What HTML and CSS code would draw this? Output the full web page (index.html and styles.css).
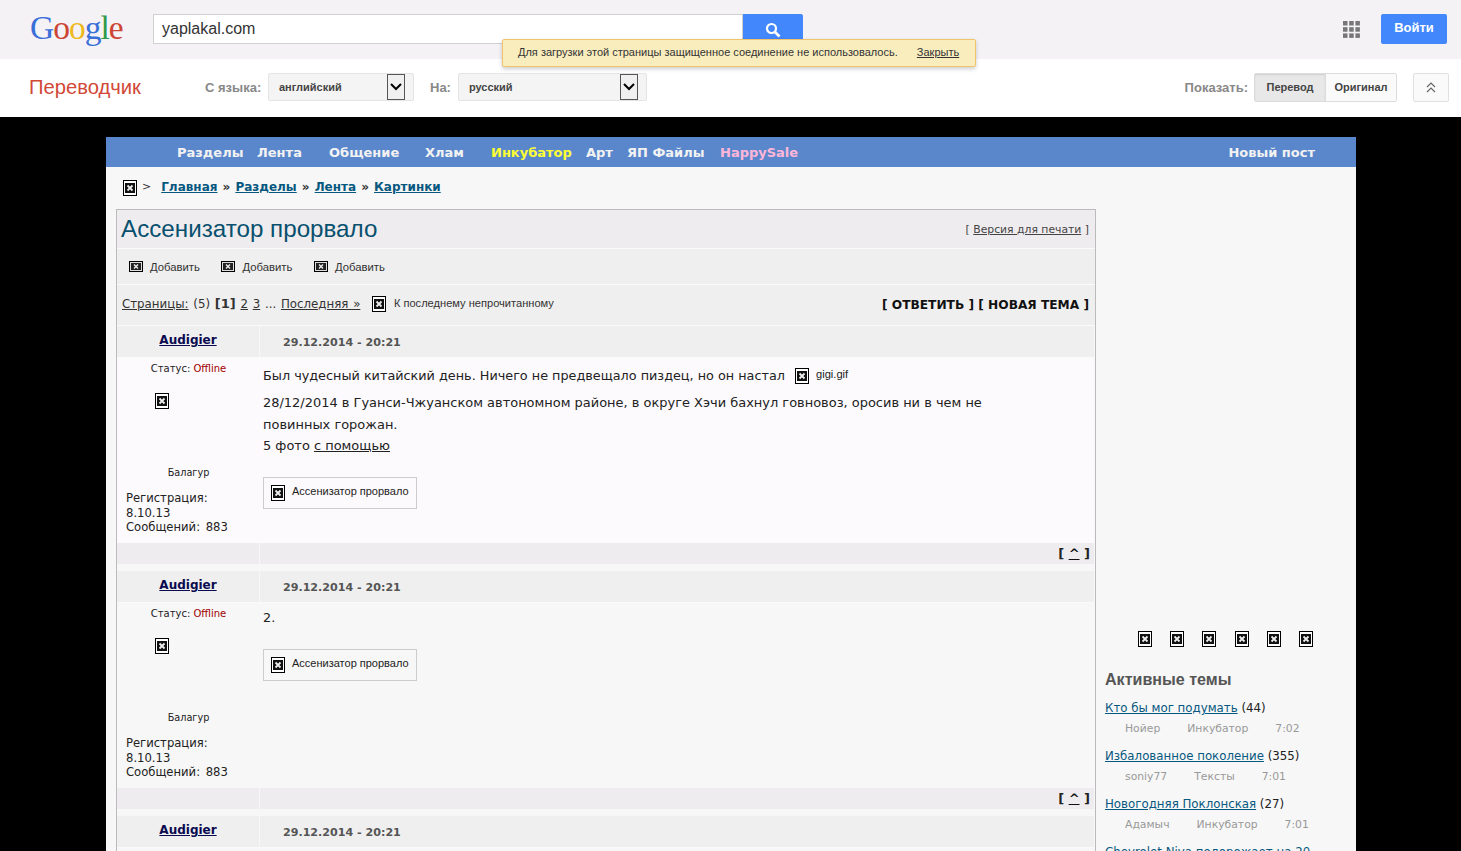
FILE: index.html
```html
<!DOCTYPE html>
<html lang="ru">
<head>
    <meta charset="UTF-8">
    <title>Ассенизатор прорвало</title>
    <link rel="stylesheet" href="styles.css">
</head>
<body>
    <svg class="defs" width="0" height="0">
        <symbol id="broken" viewBox="0 0 14 16">
            <rect x="0.5" y="0.5" width="13" height="15" fill="#fff" stroke="#000"/>
            <rect x="2" y="3" width="10" height="10" fill="#111"/>
            <path d="M4.5 5.5l5 5M9.5 5.5l-5 5" stroke="#eee" stroke-width="1.8"/>
        </symbol>
        <symbol id="broken-wide" viewBox="0 0 14 11">
            <rect x="0.5" y="0.5" width="13" height="10" fill="#ddd" stroke="#000"/>
            <rect x="2" y="2" width="10" height="7" fill="#222"/>
            <path d="M5 3.5l4 4M9 3.5l-4 4" stroke="#eee" stroke-width="1.4"/>
        </symbol>
    </svg>

    <!-- Google bar -->
    <header class="gbar">
        <div class="logo"><span class="blue">G</span><span class="red">o</span><span class="yellow">o</span><span class="blue">g</span><span class="green">l</span><span class="red">e</span></div>
        <div class="search">
            <div class="search-input">yaplakal.com</div>
            <div class="search-button">
                <svg width="16" height="16" viewBox="0 0 16 16"><circle cx="6.5" cy="6.5" r="4.5" fill="none" stroke="#fff" stroke-width="2.2"/><path d="M10 10l4.5 4.5" stroke="#fff" stroke-width="2.6"/></svg>
            </div>
        </div>
        <div class="gbar-right">
            <svg class="apps" width="17" height="17" viewBox="0 0 17 17" fill="#777">
                <rect width="4.5" height="4.5"/><rect x="6.2" width="4.5" height="4.5"/><rect x="12.4" width="4.5" height="4.5"/>
                <rect y="6.2" width="4.5" height="4.5"/><rect x="6.2" y="6.2" width="4.5" height="4.5"/><rect x="12.4" y="6.2" width="4.5" height="4.5"/>
                <rect y="12.4" width="4.5" height="4.5"/><rect x="6.2" y="12.4" width="4.5" height="4.5"/><rect x="12.4" y="12.4" width="4.5" height="4.5"/>
            </svg>
            <div class="login">Войти</div>
        </div>
    </header>

    <!-- Security notice -->
    <div class="notice">
        <span>Для загрузки этой страницы защищенное соединение не использовалось.</span>
        <a href="#">Закрыть</a>
    </div>

    <!-- Translate bar -->
    <div class="tbar">
        <div class="tbar-title">Переводчик</div>
        <span class="tbar-label from-label">С языка:</span>
        <div class="lang lang-from">
            <span>английский</span>
            <div class="lang-arrow"><svg width="12" height="8" viewBox="0 0 12 8"><path d="M1 1l5 5 5-5" fill="none" stroke="#000" stroke-width="2"/></svg></div>
        </div>
        <span class="tbar-label to-label">На:</span>
        <div class="lang lang-to">
            <span>русский</span>
            <div class="lang-arrow"><svg width="12" height="8" viewBox="0 0 12 8"><path d="M1 1l5 5 5-5" fill="none" stroke="#000" stroke-width="2"/></svg></div>
        </div>
        <div class="tbar-right">
            <span class="tbar-label">Показать:</span>
            <div class="toggle">
                <div class="toggle-item selected">Перевод</div>
                <div class="toggle-item">Оригинал</div>
            </div>
            <div class="collapse">
                <svg width="10" height="11" viewBox="0 0 10 11"><path d="M1 5l4-4 4 4M1 10l4-4 4 4" fill="none" stroke="#666" stroke-width="1.2"/></svg>
            </div>
        </div>
    </div>

    <!-- Forum page -->
    <div class="stage">
        <div class="page">
            <nav class="nav">
                <a href="#" class="n1">Разделы</a>
                <a href="#" class="n2">Лента</a>
                <a href="#" class="n3">Общение</a>
                <a href="#" class="n4">Хлам</a>
                <a href="#" class="n5 incubator">Инкубатор</a>
                <a href="#" class="n6">Арт</a>
                <a href="#" class="n7">ЯП Файлы</a>
                <a href="#" class="n8 happy">HappySale</a>
                <a href="#" class="new-post">Новый пост</a>
            </nav>

            <div class="crumbs">
                <svg class="ico"><use href="#broken"/></svg>
                <span class="gt">&gt;</span>
                <span class="crumb-links"><a href="#">Главная</a> » <a href="#">Разделы</a> » <a href="#">Лента</a> » <a href="#">Картинки</a></span>
            </div>

            <div class="columns">
                <main class="topic">
                    <div class="topic-title">
                        <h1>Ассенизатор прорвало</h1>
                        <span class="print">[ <a href="#">Версия для печати</a> ]</span>
                    </div>
                    <div class="topic-add">
                        <span class="add"><svg class="ico-wide"><use href="#broken-wide"/></svg>Добавить</span>
                        <span class="add"><svg class="ico-wide"><use href="#broken-wide"/></svg>Добавить</span>
                        <span class="add"><svg class="ico-wide"><use href="#broken-wide"/></svg>Добавить</span>
                    </div>
                    <div class="topic-pages">
                        <div class="pages">
                            <a href="#">Страницы:</a> (5) <b>[1]</b> <a href="#">2</a> <a href="#">3</a> ... <a href="#">Последняя »</a>
                            <svg class="ico unread-ico"><use href="#broken"/></svg>
                            <span class="unread">К последнему непрочитанному</span>
                        </div>
                        <div class="reply">[ ОТВЕТИТЬ ] [ НОВАЯ ТЕМА ]</div>
                    </div>

                    <article class="post">
                        <div class="post-author"><a href="#">Audigier</a></div>
                        <div class="post-date">29.12.2014 - 20:21</div>
                        <aside class="post-user">
                            <div class="status">Статус: <span>Offline</span></div>
                            <svg class="ico avatar"><use href="#broken"/></svg>
                            <div class="rank">Балагур</div>
                            <div class="stats">Регистрация:<br>8.10.13<br>Сообщений: 883</div>
                        </aside>
                        <div class="post-body">
                            <p class="line-one">Был чудесный китайский день. Ничего не предвещало пиздец, но он настал <svg class="ico gif-ico"><use href="#broken"/></svg><span class="gif">gigi.gif</span></p>
                            <p class="text">28/12/2014 в Гуанси-Чжуанском автономном районе, в округе Хэчи бахнул говновоз, оросив ни в чем не<br>повинных горожан.<br>5 фото <a href="#">с помощью</a></p>
                            <div class="thumb"><svg class="ico"><use href="#broken"/></svg><span>Ассенизатор прорвало</span></div>
                        </div>
                        <div class="post-foot-l"></div>
                        <div class="post-foot-r"><b>[ <a href="#">^</a> ]</b></div>
                    </article>

                    <article class="post second">
                        <div class="post-author"><a href="#">Audigier</a></div>
                        <div class="post-date">29.12.2014 - 20:21</div>
                        <aside class="post-user">
                            <div class="status">Статус: <span>Offline</span></div>
                            <svg class="ico avatar"><use href="#broken"/></svg>
                            <div class="rank">Балагур</div>
                            <div class="stats">Регистрация:<br>8.10.13<br>Сообщений: 883</div>
                        </aside>
                        <div class="post-body">
                            <p class="line-one">2.</p>
                            <div class="thumb thumb-second"><svg class="ico"><use href="#broken"/></svg><span>Ассенизатор прорвало</span></div>
                        </div>
                        <div class="post-foot-l"></div>
                        <div class="post-foot-r"><b>[ <a href="#">^</a> ]</b></div>
                    </article>

                    <article class="post">
                        <div class="post-author"><a href="#">Audigier</a></div>
                        <div class="post-date">29.12.2014 - 20:21</div>
                    </article>
                </main>

                <aside class="side">
                    <div class="side-icons">
                        <svg class="ico"><use href="#broken"/></svg>
                        <svg class="ico"><use href="#broken"/></svg>
                        <svg class="ico"><use href="#broken"/></svg>
                        <svg class="ico"><use href="#broken"/></svg>
                        <svg class="ico"><use href="#broken"/></svg>
                        <svg class="ico"><use href="#broken"/></svg>
                    </div>
                    <h2>Активные темы</h2>
                    <div class="hot">
                        <div class="hot-title"><a href="#">Кто бы мог подумать</a> (44)</div>
                        <div class="hot-meta"><span>Нойер</span><span>Инкубатор</span><span>7:02</span></div>
                    </div>
                    <div class="hot">
                        <div class="hot-title"><a href="#">Избалованное поколение</a> (355)</div>
                        <div class="hot-meta"><span>soniy77</span><span>Тексты</span><span>7:01</span></div>
                    </div>
                    <div class="hot">
                        <div class="hot-title"><a href="#">Новогодняя Поклонская</a> (27)</div>
                        <div class="hot-meta"><span>Адамыч</span><span>Инкубатор</span><span>7:01</span></div>
                    </div>
                    <div class="hot">
                        <div class="hot-title"><a href="#">Chevrolet Niva подорожает на 20</a></div>
                    </div>
                </aside>
            </div>
        </div>
    </div>
</body>
</html>
```

FILE: styles.css
```css
/* General */
html, body {
    margin: 0;
    padding: 0;
    height: 851px;
    overflow: hidden;
}

body {
    font-family: "DejaVu Sans", Verdana, sans-serif;
    font-size: 13px;
    color: #222;
    background-color: #000;
    position: relative;
}

.defs {
    position: absolute;
}

.ico {
    width: 14px;
    height: 16px;
    flex: none;
}

.ico-wide {
    width: 14px;
    height: 11px;
    margin-right: 7px;
    flex: none;
}

/* Google bar */
.gbar {
    height: 59px;
    background-color: #f5f2f6;
    display: flex;
    align-items: flex-start;
    box-sizing: border-box;
    padding-left: 30px;
    font-family: "Liberation Sans", Arial, sans-serif;
}

.logo {
    font-family: "Liberation Serif", "Times New Roman", serif;
    font-size: 33.5px;
    line-height: 40px;
    margin-top: 8px;
    width: 123px;
    letter-spacing: -1px;
}

.blue { color: #3a6fd8; }
.red { color: #cc4433; }
.yellow { color: #eeb920; }
.green { color: #2f9a4a; }

.search {
    display: flex;
    margin-top: 14px;
}

.search-input {
    width: 590px;
    height: 30px;
    box-sizing: border-box;
    border: 1px solid #d0d0d0;
    background-color: #fff;
    padding-left: 8px;
    font-size: 16px;
    line-height: 27px;
    color: #333;
}

.search-button {
    width: 60px;
    height: 30px;
    background-color: #4387fd;
    border-radius: 0 2px 2px 0;
    display: flex;
    align-items: center;
    justify-content: center;
    padding-top: 2px;
    box-sizing: border-box;
}

.gbar-right {
    margin-left: auto;
    display: flex;
    align-items: center;
    gap: 21px;
    padding: 14px 14px 0 0;
}

.login {
    width: 66px;
    height: 30px;
    border-radius: 2px;
    background-color: #4387fd;
    color: #fff;
    font-weight: bold;
    font-size: 13px;
    text-align: center;
    line-height: 28px;
}

/* Security notice */
.notice {
    position: absolute;
    left: 502px;
    top: 39px;
    width: 474px;
    height: 28px;
    box-sizing: border-box;
    background-color: #f9edbe;
    border: 1px solid #f0c36d;
    border-radius: 2px;
    box-shadow: 0 2px 4px rgba(0, 0, 0, 0.2);
    font-family: "Liberation Sans", Arial, sans-serif;
    font-size: 11px;
    line-height: 24px;
    color: #333;
    padding-left: 15px;
    white-space: nowrap;
}

.notice a {
    color: #333;
    margin-left: 16px;
}

/* Translate bar */
.tbar {
    height: 58px;
    background-color: #fff;
    display: flex;
    align-items: center;
    box-sizing: border-box;
    padding: 0 0 2px 29px;
    font-family: "Liberation Sans", Arial, sans-serif;
}

.tbar-title {
    font-size: 20.2px;
    color: #d14836;
    width: 176px;
}

.tbar-label {
    font-size: 13px;
    font-weight: bold;
    color: #888;
}

.from-label {
    width: 63px;
}

.to-label {
    margin: 0 7px 0 16px;
}

.lang {
    height: 28px;
    background-color: #f4f4f4;
    border: 1px solid #e4e4e4;
    border-radius: 2px;
    box-sizing: border-box;
    display: flex;
    justify-content: space-between;
    padding-left: 10px;
    font-size: 11px;
    font-weight: bold;
    line-height: 26px;
    color: #444;
}

.lang-from {
    width: 146px;
}

.lang-to {
    width: 189px;
}

.lang-arrow {
    width: 18px;
    height: 26px;
    margin-right: 8px;
    border: 1px solid #555;
    box-sizing: border-box;
    background-color: #f0f0f0;
    display: flex;
    align-items: center;
    justify-content: center;
}

.tbar-right {
    margin-left: auto;
    display: flex;
    align-items: center;
    padding-right: 12px;
}

.toggle {
    display: flex;
    margin-left: 6px;
    height: 29px;
    border: 1px solid #dcdcdc;
    border-radius: 2px;
    box-sizing: border-box;
    font-size: 11px;
    font-weight: bold;
    line-height: 27px;
    color: #444;
}

.toggle-item {
    width: 70px;
    text-align: center;
    background-color: #fafafa;
}

.toggle-item.selected {
    background-color: #e8e8e8;
    box-shadow: inset 0 1px 2px rgba(0, 0, 0, 0.1);
    border-right: 1px solid #dcdcdc;
}

.collapse {
    width: 36px;
    height: 29px;
    margin-left: 16px;
    border: 1px solid #e0e0e0;
    border-radius: 2px;
    box-sizing: border-box;
    background-color: #fafafa;
    display: flex;
    align-items: center;
    justify-content: center;
}

/* Forum page */
.stage {
    padding: 20px 105px 0 106px;
}

.page {
    background-color: #f7f7f7;
    height: 714px;
    overflow: hidden;
}

.nav {
    height: 30px;
    background-color: #5a87cc;
    font-weight: bold;
    font-size: 13px;
    line-height: 31px;
    display: flex;
    padding-left: 71px;
}

.nav a {
    color: #f2f2f2;
    text-decoration: none;
}

.nav .n1 { width: 80px; }
.nav .n2 { width: 72px; }
.nav .n3 { width: 96px; }
.nav .n4 { width: 66px; }
.nav .n5 { width: 95px; }
.nav .n6 { width: 41px; }
.nav .n7 { width: 93px; }

.nav .incubator { color: #ffff33; }
.nav .happy { color: #ffb6d9; }

.nav .new-post {
    margin-left: auto;
    margin-right: 41px;
}

.crumbs {
    display: flex;
    align-items: center;
    gap: 4px;
    height: 42px;
    padding-left: 17px;
    font-weight: bold;
    font-size: 12px;
    color: #333;
}

.crumbs a {
    color: #07587f;
}

.crumbs .gt {
    font-weight: normal;
    font-size: 11px;
    margin: 0 6px 3px 1px;
}

.crumb-links {
    margin-bottom: 2px;
    word-spacing: 0.9px;
}

.columns {
    display: flex;
    align-items: flex-start;
    margin-left: 10px;
}

/* Topic */
.topic {
    width: 980px;
    box-sizing: border-box;
    border: 1px solid #bbb;
    border-bottom: none;
    background-color: #f7f7f7;
}

.topic-title {
    height: 38px;
    background-color: #efecef;
    border-bottom: 1px solid #fafafa;
    display: flex;
    justify-content: space-between;
    align-items: center;
    padding: 0 6px 0 4px;
}

.topic-title h1 {
    margin: 0;
    font-family: "Liberation Sans", Arial, sans-serif;
    font-weight: normal;
    font-size: 24.2px;
    color: #07506e;
}

.print {
    font-size: 10.8px;
    color: #444;
}

.print a {
    color: #444;
}

.topic-add {
    height: 35px;
    background-color: #efefef;
    border-bottom: 1px solid #fafafa;
    display: flex;
    align-items: center;
    padding-left: 12px;
    gap: 21.5px;
    font-family: "Liberation Sans", Arial, sans-serif;
    font-size: 11.3px;
    color: #333;
}

.add {
    display: flex;
    align-items: center;
}

.topic-pages {
    height: 40px;
    background-color: #efefef;
    border-bottom: 1px solid #fafafa;
    display: flex;
    justify-content: space-between;
    align-items: center;
    padding: 0 6px 0 5px;
    font-size: 11.8px;
}

.pages {
    color: #333;
    white-space: nowrap;
    margin-bottom: 2px;
    word-spacing: 1px;
}

.pages a {
    color: #333;
}

.pages b {
    font-size: 13px;
}

.unread-ico {
    vertical-align: -4px;
    margin-left: 7px;
}

.unread {
    font-family: "Liberation Sans", Arial, sans-serif;
    font-size: 11.1px;
    word-spacing: 0;
    margin-left: 3px;
    position: relative;
    top: -1px;
}

.reply {
    font-size: 12.2px;
    font-weight: bold;
    color: #111;
}

/* Posts */
.post {
    display: grid;
    grid-template-columns: 142px 1fr;
    column-gap: 1px;
    margin: 0 1px 6px 0;
}

.post.second {
    margin: 7px 1px 7px 0;
}

.post-author, .post-date {
    height: 32px;
    background-color: #efefef;
    border-bottom: 1px solid #fafafa;
    box-sizing: border-box;
}

.post-author {
    text-align: center;
    font-size: 12px;
    font-weight: bold;
    line-height: 29px;
}

.post-author a {
    color: #0a0a50;
}

.post-date {
    padding-left: 23px;
    font-size: 11.1px;
    font-weight: bold;
    color: #555;
    line-height: 34px;
}

.post-user, .post-body {
    height: 185px;
    box-sizing: border-box;
    background-color: #fdfafd;
}

.post.second .post-user, .post.second .post-body {
    background-color: #f7f7f7;
}

.post-user {
    font-size: 10px;
    padding-top: 5px;
    margin-right: -1px;
}

.status {
    text-align: center;
    color: #222;
}

.status span {
    color: #a00000;
}

.avatar {
    display: block;
    margin: 19px 0 0 38px;
}

.rank {
    text-align: center;
    font-size: 9.7px;
    margin-top: 58px;
}

.stats {
    margin: 13px 0 0 9px;
    font-size: 11.6px;
    line-height: 14.5px;
    word-spacing: 2px;
}

.post-body {
    padding: 9px 3px;
}

.post.second .post-body {
    padding-top: 6px;
}

.post-body p {
    margin: 0;
}

.line-one {
    font-size: 12.8px;
    line-height: 18px;
}

.gif-ico {
    vertical-align: -4px;
    margin-left: 6px;
}

.gif {
    font-family: "Liberation Sans", Arial, sans-serif;
    font-size: 11.1px;
    margin-left: 7px;
    position: relative;
    top: -2px;
}

.post-body .text {
    margin-top: 7px;
    font-size: 12.96px;
    line-height: 21.5px;
}

.post-body a {
    color: #222;
}

.thumb {
    display: flex;
    align-items: center;
    gap: 7px;
    width: 154px;
    height: 32px;
    margin-top: 20px;
    box-sizing: border-box;
    border: 1px solid #ccc;
    padding-left: 7px;
    font-family: "Liberation Sans", Arial, sans-serif;
    font-size: 11px;
    white-space: nowrap;
}

.thumb span {
    margin-bottom: 3px;
}

.thumb-second {
    margin-top: 22px;
}

.thumb-second span {
    margin-bottom: 4px;
}

.post-foot-l, .post-foot-r {
    height: 21px;
    background-color: #efecef;
}

.post-foot-r {
    text-align: right;
    padding-right: 4px;
    line-height: 21px;
}

.post-foot-r a {
    color: #111;
}

/* Sidebar */
.side {
    width: 240px;
    padding: 422px 0 0 9px;
    box-sizing: border-box;
    flex: none;
}

.side-icons {
    display: flex;
    gap: 18.2px;
    padding-left: 33px;
}

.side h2 {
    margin: 23px 0 12px;
    font-family: "Liberation Sans", Arial, sans-serif;
    font-size: 16.1px;
    font-weight: bold;
    color: #555;
}

.hot {
    margin-bottom: 12px;
    font-size: 11.8px;
    white-space: nowrap;
}

.hot-title a {
    color: #07587f;
}

.hot-meta {
    display: flex;
    gap: 27px;
    margin-top: 6px;
    padding-left: 20px;
    font-size: 10.8px;
    color: #999;
    line-height: 16px;
}
```
